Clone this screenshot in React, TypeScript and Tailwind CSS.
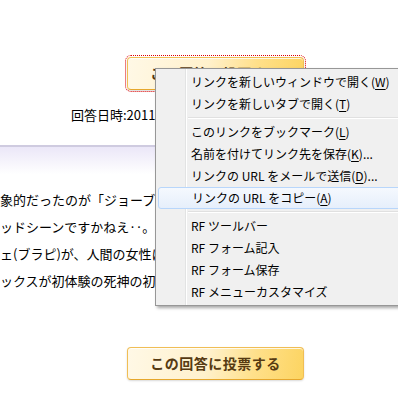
import React from "react";

const jp = { fontFamily: '"Noto Sans CJK JP", "Noto Sans", sans-serif' };

type Item = { label: string; key?: string; after?: string; hover?: boolean };

const groups: Item[][] = [
  [
    { label: "リンクを新しいウィンドウで開く(", key: "W", after: ")" },
    { label: "リンクを新しいタブで開く(", key: "T", after: ")" },
  ],
  [
    { label: "このリンクをブックマーク(", key: "L", after: ")" },
    { label: "名前を付けてリンク先を保存(", key: "K", after: ")..." },
    { label: "リンクの URL をメールで送信(", key: "D", after: ")..." },
    { label: "リンクの URL をコピー(", key: "A", after: ")", hover: true },
  ],
  [
    { label: "RF ツールバー" },
    { label: "RF フォーム記入" },
    { label: "RF フォーム保存" },
    { label: "RF メニューカスタマイズ" },
  ],
];

function VoteButton({ focused }: { focused?: boolean }) {
  return (
    <button
      className={`ml-[127px] flex h-[33px] w-[177px] items-center justify-center rounded-[4px] border border-[#f0be55] border-b-[#e6a72c] bg-[linear-gradient(100deg,#fff8e6_0%,#fff1cc_45%,#ffe08a_72%,#fcd461_100%)] text-[14px] font-bold tracking-[0.5px] text-[#563a12] shadow-[inset_0_1px_0_rgba(255,255,255,0.8),0_1px_2px_rgba(0,0,0,0.15)] ${
        focused ? "outline-1 outline-offset-1 outline-dotted outline-[#e00000]" : ""
      }`}
      style={jp}
    >
      この回答に投票する
    </button>
  );
}

function ContextMenu() {
  return (
    <div
      className="absolute left-[155px] top-[68px] w-[270px] border border-[#979797] bg-[#f0f0f0] py-[2px] pl-[2px] text-[12px] text-black shadow-[2px_2px_3px_rgba(0,0,0,0.35)]"
      style={jp}
    >
      <div className="absolute bottom-0 left-[29px] top-0 w-[2px] border-l border-[#e2e3e3] bg-white" />
      {groups.map((g, gi) => (
        <div key={gi}>
          {gi > 0 && (
            <div className="flex h-[6px] items-center pl-[30px]">
              <div className="h-[2px] w-full border-t border-[#e0e0e0] bg-white" />
            </div>
          )}
          {g.map((it) => (
            <div
              key={it.label}
              className={`relative flex h-[22px] items-center rounded-[3px] pl-[33px] ${
                it.hover
                  ? "border border-[#b8d6fb] bg-[linear-gradient(#f5f9fe,#e6effb)] pl-[32px]"
                  : ""
              }`}
            >
              <span className="whitespace-nowrap">
                {it.label}
                {it.key && <span className="underline underline-offset-2">{it.key}</span>}
                {it.after}
              </span>
            </div>
          ))}
        </div>
      ))}
    </div>
  );
}

export default function App() {
  const lines = [
    "象的だったのが「ジョーブラックをよろしく」の",
    "ッドシーンですかねえ‥。ジョー",
    "ェ(ブラピ)が、人間の女性に恋をして",
    "ックスが初体験の死神の初々しさ",
  ];
  return (
    <div className="relative h-[399px] w-[398px] overflow-hidden bg-white text-black" style={jp}>
      <div className="pt-[57px]">
        <VoteButton focused />
      </div>
      <div className="mt-[17px] whitespace-nowrap pl-[71px] text-[13px] leading-[16px]">
        回答日時:2011-05-21 14:32:08
      </div>
      <div className="mt-[22px] h-[2px] bg-[#cfcbe0]" />
      <div className="h-[39px] bg-[linear-gradient(#ebe7f8,#ffffff_70%)]" />
      <div className="whitespace-nowrap text-[13px] leading-[27px]">
        {lines.map((l) => (
          <div key={l}>{l}</div>
        ))}
      </div>
      <div className="mt-[53px]">
        <VoteButton />
      </div>
      <ContextMenu />
    </div>
  );
}
